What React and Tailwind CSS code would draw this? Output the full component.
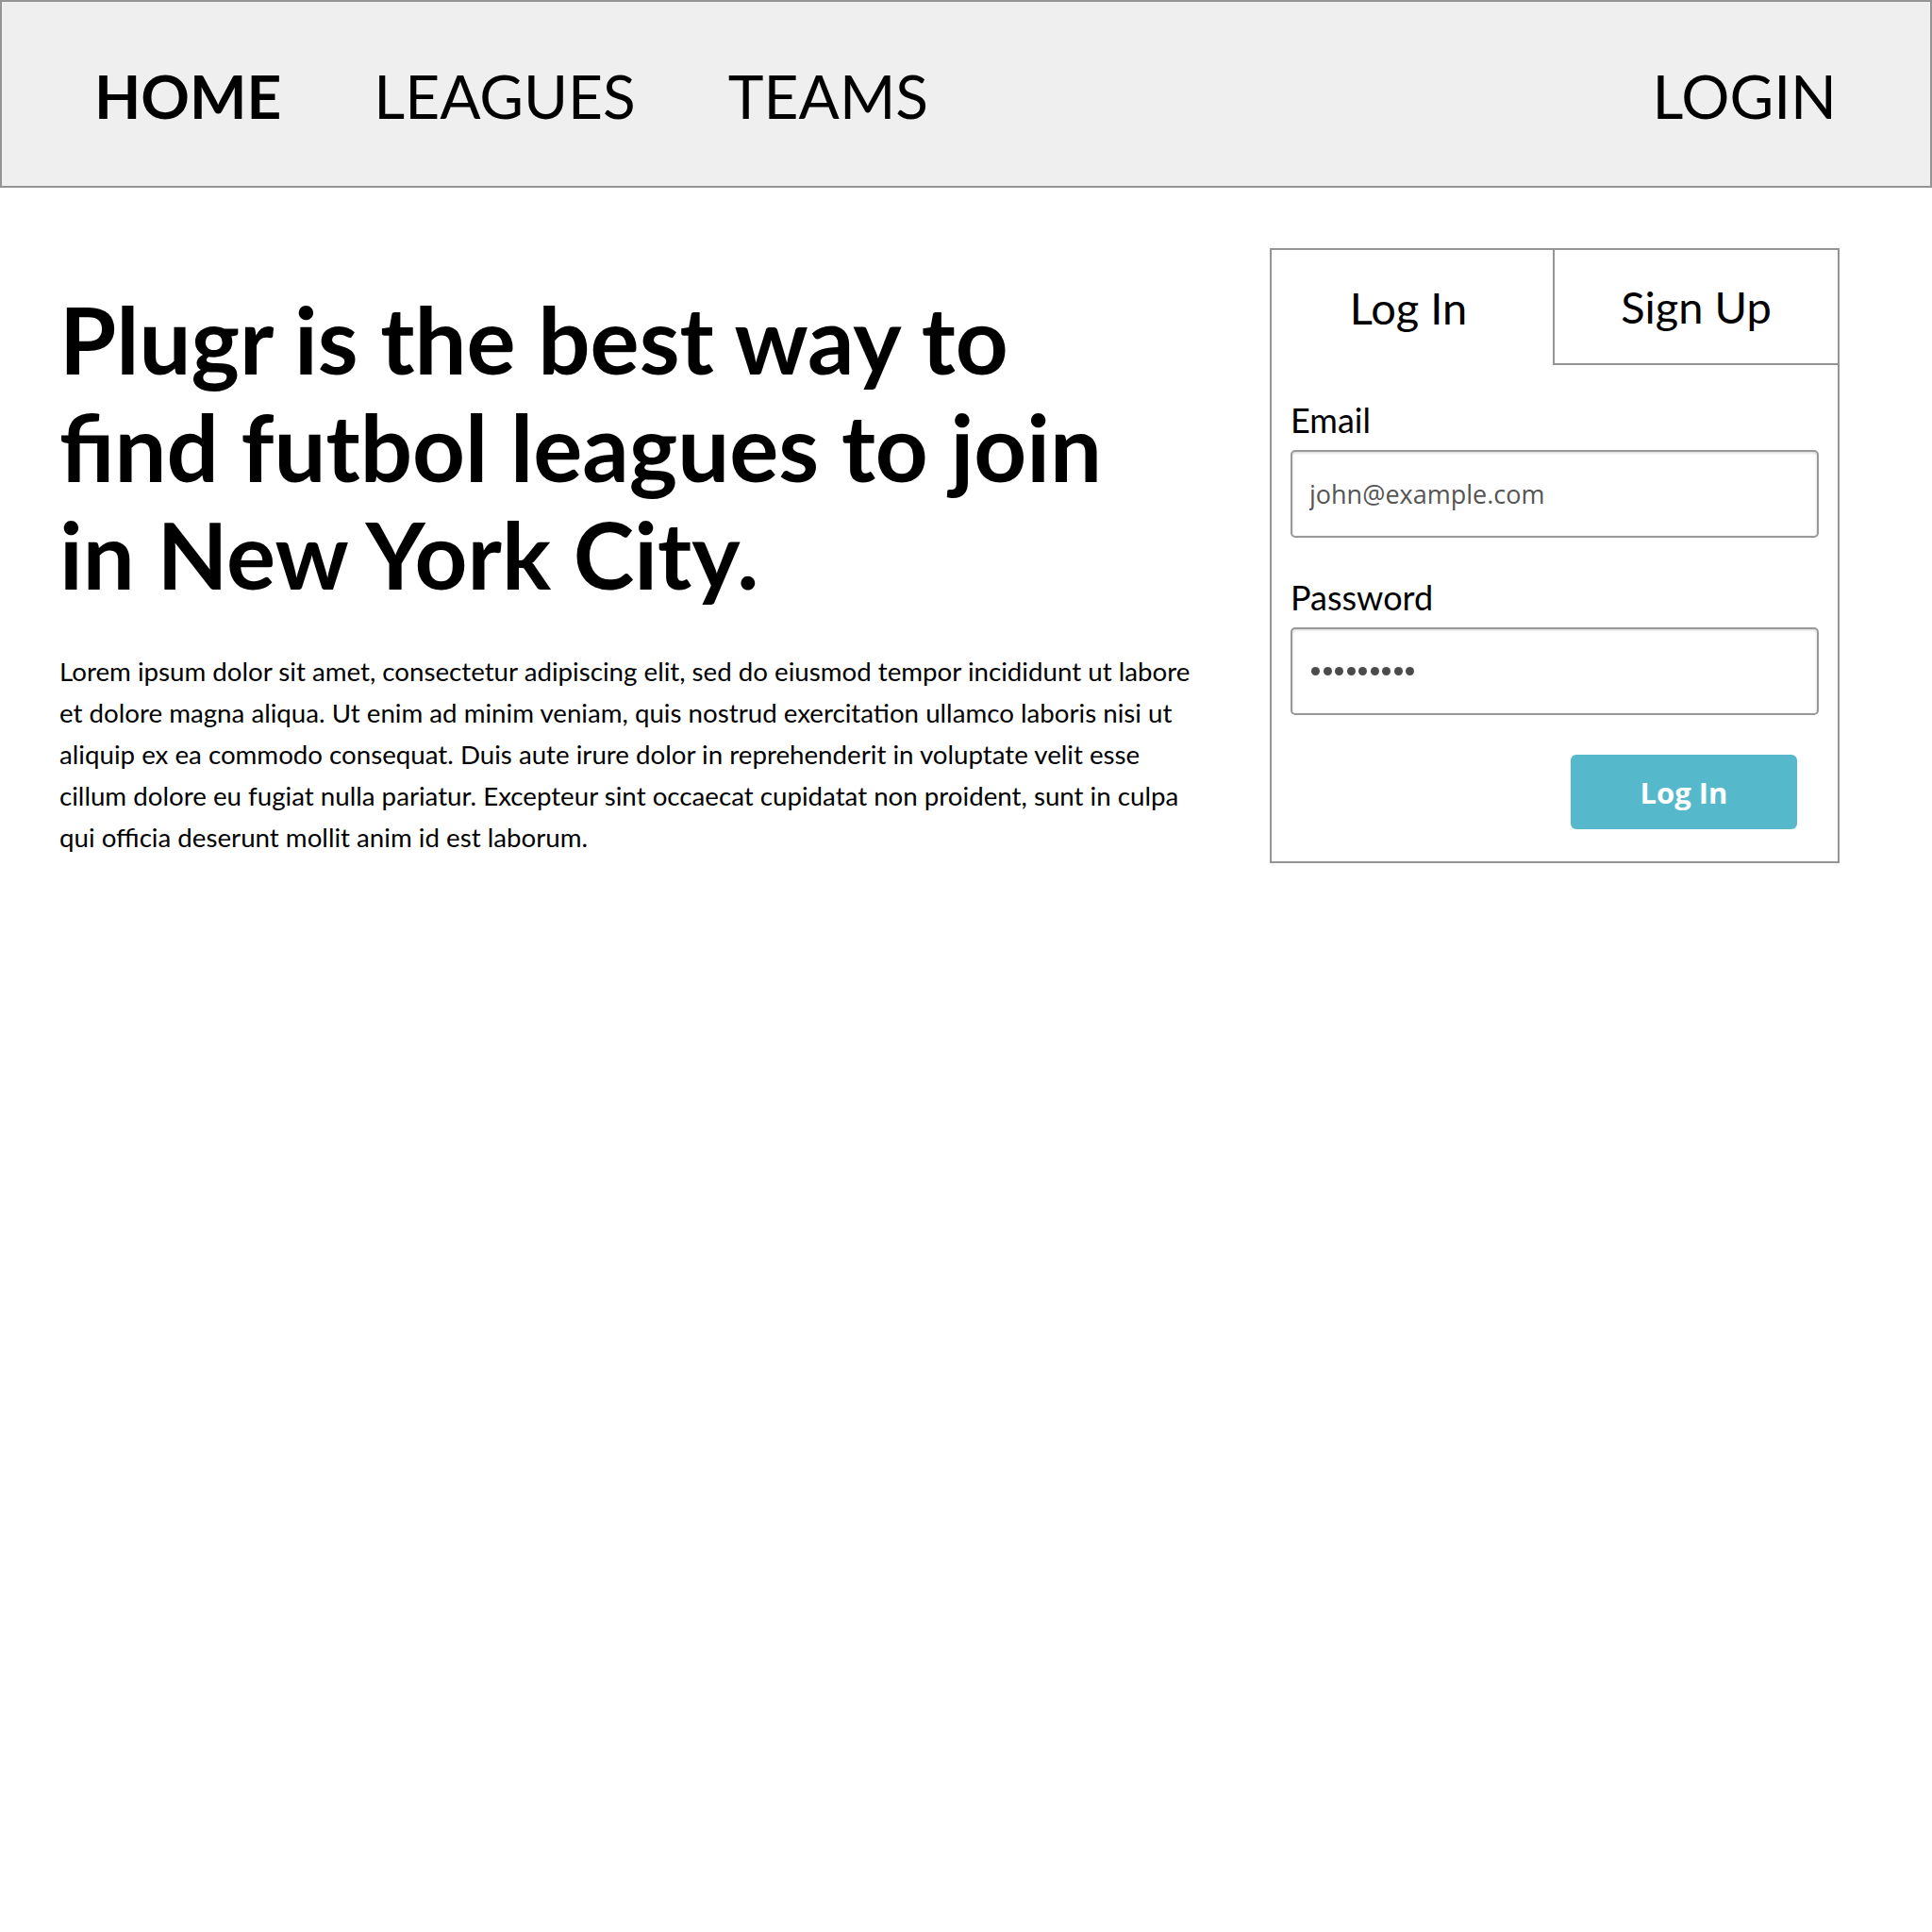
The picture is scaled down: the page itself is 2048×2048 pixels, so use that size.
import React from 'react';

const NavBar = () => {
    return (
        <nav className="h-[199px] bg-[#efefef] border-2 border-[#959595] flex items-center pt-[5px] pl-[98px] pr-[99px] text-[64px] text-black leading-[1.2]">
            <div className="flex items-center gap-[98px]">
                <a className="font-bold">HOME</a>
                <a>LEAGUES</a>
                <a>TEAMS</a>
            </div>
            <a className="ml-auto">LOGIN</a>
        </nav>
    );
};

const LoginCard = () => {
    return (
        <div className="w-[604px] shrink-0 border-2 border-[#959595] bg-white flex flex-col">
            {/* Tabs */}
            <div className="flex h-[122px]">
                <div className="flex-1 flex items-center justify-center pr-[8px] text-[47px] leading-[1.2]">Log In</div>
                <div className="w-[302px] flex items-center justify-center text-[47px] leading-[1.2] border-l-2 border-b-2 border-[#959595]">Sign Up</div>
            </div>

            <div className="flex flex-col px-[20px] pb-[34px]">
                <label className="mt-[37px] text-[36px] leading-[1.2]">Email</label>
                <input
                    type="text"
                    readOnly
                    placeholder="john@example.com"
                    className="mt-[10px] h-[93px] w-full border-2 border-[#999] rounded-[5px] shadow-[inset_0_1px_3px_rgba(0,0,0,0.18)] pl-[18px] text-[27px] font-['Open_Sans',sans-serif] text-[#555] placeholder:text-[#555] outline-none"
                />

                <label className="mt-[42px] text-[36px] leading-[1.2]">Password</label>
                <div className="mt-[10px] h-[93px] w-full border-2 border-[#999] rounded-[5px] shadow-[inset_0_1px_3px_rgba(0,0,0,0.18)] pl-[20px] flex items-center gap-[3.5px]">
                    {Array.from({ length: 9 }).map((_, i) => (
                        <span key={i} className="w-[9px] h-[9px] rounded-full bg-[#4a4a4a]" />
                    ))}
                </div>

                <button className="mt-[42px] self-end mr-[23px] w-[240px] h-[79px] rounded-[6px] bg-[#56b9cb] text-white text-[31px] font-bold font-['Open_Sans',sans-serif]">
                    Log In
                </button>
            </div>
        </div>
    );
};

export default function App() {
    return (
        <div className="w-[2048px] min-h-[2048px] bg-white text-black font-['Lato',sans-serif]">
            <NavBar />

            <main className="flex items-start pt-[64px] pl-[63px]">
                <div className="w-[1217px] shrink-0 mr-[66px]">
                    <h1 className="mt-[40px] max-w-[1160px] text-[97.5px] font-bold leading-[114px]">
                        Plugr is the best way to find futbol leagues to join in New York City.
                    </h1>
                    <p className="mt-[45px] text-[27.7px] leading-[44px]">
                        Lorem ipsum dolor sit amet, consectetur adipiscing elit, sed do eiusmod tempor incididunt ut labore et dolore magna aliqua. Ut enim ad minim veniam, quis nostrud exercitation ullamco laboris nisi ut aliquip ex ea commodo consequat. Duis aute irure dolor in reprehenderit in voluptate velit esse cillum dolore eu fugiat nulla pariatur. Excepteur sint occaecat cupidatat non proident, sunt in culpa qui officia deserunt mollit anim id est laborum.
                    </p>
                </div>

                <LoginCard />
            </main>
        </div>
    );
}
